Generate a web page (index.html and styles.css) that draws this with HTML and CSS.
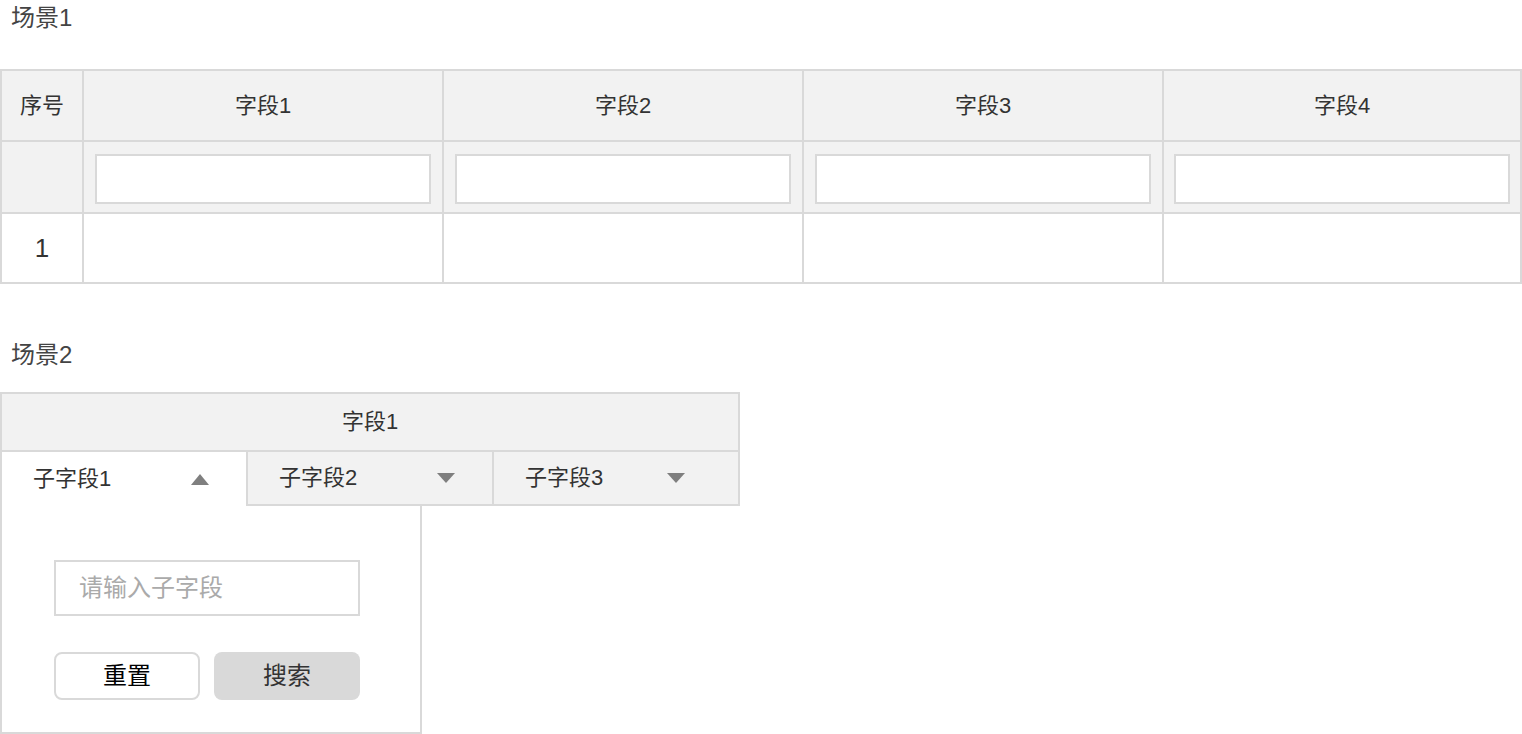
FILE: index.html
```html
<!DOCTYPE html>
<html lang="zh-CN">
<head>
    <meta charset="UTF-8">
    <title>场景</title>
    <link rel="stylesheet" href="styles.css">
</head>
<body>
    <div class="scene-title">场景1</div>
    <div class="grid-table">
        <div class="cell head">序号</div>
        <div class="cell head">字段1</div>
        <div class="cell head">字段2</div>
        <div class="cell head">字段3</div>
        <div class="cell head">字段4</div>

        <div class="cell filter"></div>
        <div class="cell filter"><input type="text"></div>
        <div class="cell filter"><input type="text"></div>
        <div class="cell filter"><input type="text"></div>
        <div class="cell filter"><input type="text"></div>

        <div class="cell data num">1</div>
        <div class="cell data"></div>
        <div class="cell data"></div>
        <div class="cell data"></div>
        <div class="cell data"></div>
    </div>

    <div class="scene-title second">场景2</div>
    <div class="group-table">
        <div class="group-head">字段1</div>
        <div class="sub-row">
            <div class="sub-cell active">
                <span>子字段1</span>
                <i class="arrow up"></i>
            </div>
            <div class="sub-cell">
                <span>子字段2</span>
                <i class="arrow down"></i>
            </div>
            <div class="sub-cell last">
                <span>子字段3</span>
                <i class="arrow down"></i>
            </div>
        </div>
        <div class="dropdown">
            <input type="text" class="search-input" placeholder="请输入子字段">
            <div class="btns">
                <button class="btn-reset">重置</button>
                <button class="btn-search">搜索</button>
            </div>
        </div>
    </div>
</body>
</html>
```

FILE: styles.css
```css
* {
    box-sizing: border-box;
}
body {
    margin: 0;
    font-family: "Liberation Sans", "Noto Sans CJK SC", sans-serif;
    color: #333;
    background: #fff;
}
.scene-title {
    height: 36px;
    line-height: 36px;
    padding-left: 11px;
    font-size: 24px;
    color: #444;
}
.scene-title.second {
    margin-top: 53px;
}

/* 场景1 */
.grid-table {
    margin-top: 33px;
    display: grid;
    grid-template-columns: 82px 360px 360px 360px 1fr;
    grid-template-rows: 71px 72px 70px;
    border-left: 2px solid #d9d9d9;
    border-top: 2px solid #d9d9d9;
}
.cell {
    border-right: 2px solid #d9d9d9;
    border-bottom: 2px solid #d9d9d9;
    display: flex;
    align-items: center;
    justify-content: center;
    font-size: 22px;
    line-height: 1;
}
.head,
.filter {
    background: #f2f2f2;
}
.filter {
    align-items: flex-start;
    padding-top: 12px;
}
.filter input {
    width: 336px;
    height: 50px;
    border: 2px solid #d9d9d9;
    background: #fff;
    outline: none;
}
.data {
    background: #fff;
}
.num {
    font-size: 26px;
}

/* 场景2 */
.group-table {
    margin-top: 19px;
    width: 740px;
}
.group-head {
    height: 60px;
    border: 2px solid #d9d9d9;
    background: #f2f2f2;
    font-size: 22px;
    line-height: 1;
    display: flex;
    align-items: center;
    justify-content: center;
}
.sub-row {
    display: flex;
    height: 54px;
}
.sub-cell {
    width: 246px;
    display: flex;
    align-items: center;
    padding: 0 37px 0 31px;
    font-size: 22px;
    line-height: 1;
    background: #f2f2f2;
    border-left: 2px solid #d9d9d9;
    border-bottom: 2px solid #d9d9d9;
}
.sub-cell.active {
    background: #fff;
    border-bottom: none;
}
.sub-cell.last {
    width: 248px;
    border-right: 2px solid #d9d9d9;
    padding-right: 53px;
}
.arrow {
    margin-left: auto;
    width: 0;
    height: 0;
    border-left: 9px solid transparent;
    border-right: 9px solid transparent;
}
.arrow.up {
    border-bottom: 11px solid #7f7f7f;
}
.arrow.down {
    border-top: 10px solid #7f7f7f;
}

.dropdown {
    width: 422px;
    height: 228px;
    background: #fff;
    border: 2px solid #d9d9d9;
    border-top: none;
    padding: 54px 0 0 52px;
}
.search-input {
    display: block;
    width: 306px;
    height: 56px;
    border: 2px solid #d9d9d9;
    padding-left: 23px;
    font-family: inherit;
    font-size: 24px;
    outline: none;
}
.search-input::placeholder {
    color: #aaa;
}
.btns {
    display: flex;
    gap: 14px;
    margin-top: 36px;
}
.btns button {
    width: 146px;
    height: 48px;
    border-radius: 8px;
    font-family: inherit;
    font-size: 24px;
    line-height: 1;
    cursor: pointer;
}
.btn-reset {
    background: #fff;
    border: 2px solid #d9d9d9;
    color: #000;
}
.btn-search {
    background: #d9d9d9;
    border: none;
    color: #333;
}
```
